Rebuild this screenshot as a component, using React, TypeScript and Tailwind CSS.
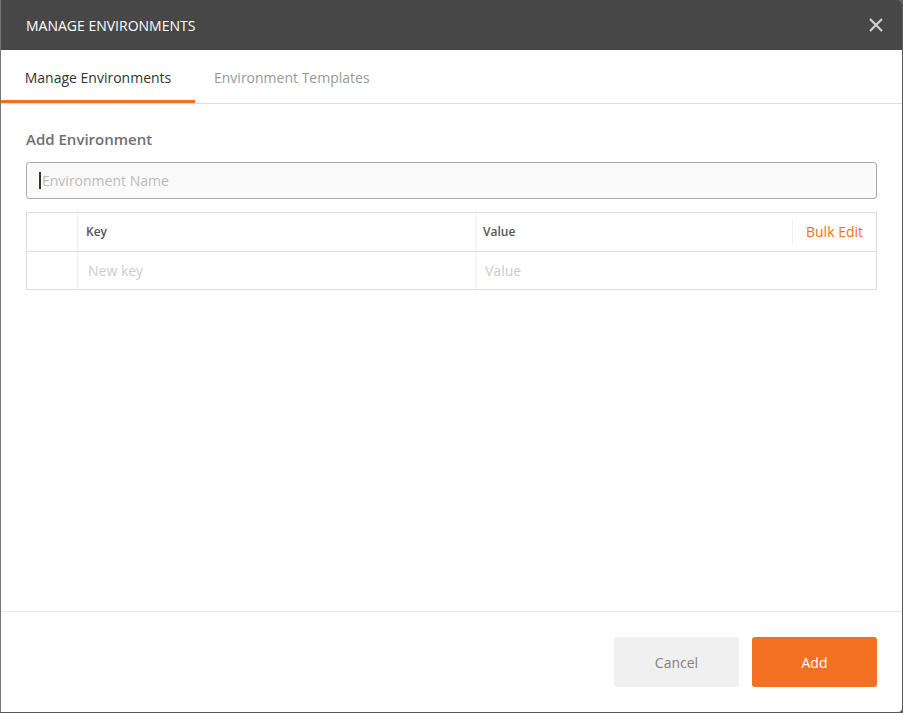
export default function App() {
  const f = { fontFamily: '"Open Sans", "Noto Sans", sans-serif' };
  return (
    <div className="w-[903px] h-[713px] bg-[#5a5a5a] overflow-hidden" style={f}>
      <div className="w-[902px] h-[712px] bg-white rounded-br-[4px] rounded-tr-[4px] flex flex-col border-l border-[#777]">
        <div className="h-[50px] bg-[#474747] flex items-center justify-between pl-[25px] pr-[18px] rounded-tr-[4px]">
          <span className="text-white text-[14px]">MANAGE ENVIRONMENTS</span>
          <svg width="16" height="16" viewBox="0 0 16 16"><path d="M2 2L14 14M14 2L2 14" stroke="#d0d0d0" strokeWidth="2.2" /></svg>
        </div>
        <div className="h-[54px] flex border-b border-[#ddd] text-[14px]">
          <div className="w-[194px] flex items-center justify-center border-b-[3px] border-[#f47023] pt-[4px] text-[#333]">Manage Environments</div>
          <div className="flex items-center pl-[19px] pt-[1px] text-[#999]">Environment Templates</div>
        </div>
        <div className="flex-1 px-[25px]">
          <div className="mt-[24px] text-[15px] font-semibold text-[#707070]">Add Environment</div>
          <div className="mt-[11px] h-[37px] rounded-[3px] border border-[#aaa] bg-[#fafafa] flex items-center pl-[12px] text-[14px] text-[#bbb]">
            <span className="w-[2px] h-[17px] bg-[#333] mr-[1px]"></span>Environment Name
          </div>
          <div className="mt-[13px] border border-[#ddd] text-[13px]">
            <div className="h-[39px] flex border-b border-[#ddd]">
              <div className="w-[52px] border-r-[3px] border-[#f6f6f6]"></div>
              <div className="w-[398px] flex items-center pl-[7px] font-semibold text-[#555] text-[12px] border-r-[2px] border-[#f6f6f6]">Key</div>
              <div className="flex-1 flex items-center pl-[6px] font-semibold text-[#555] text-[12px]">Value</div>
              <div className="my-[7px] border-l border-[#f0f0f0] flex items-center px-[13px] text-[#f47023] text-[14px]">Bulk Edit</div>
            </div>
            <div className="h-[37px] flex text-[#ccc] text-[14px]">
              <div className="w-[52px] border-r-[3px] border-[#f6f6f6]"></div>
              <div className="w-[398px] flex items-center pl-[9px] border-r-[2px] border-[#f6f6f6]">New key</div>
              <div className="flex-1 flex items-center pl-[8px]">Value</div>
            </div>
          </div>
        </div>
        <div className="h-[101px] border-t border-[#e6e6e6] flex justify-end items-start pt-[25px] pr-[25px] gap-[13px] text-[14px]">
          <button className="w-[125px] h-[50px] rounded-[3px] bg-[#f0f0f0] text-[#808080]">Cancel</button>
          <button className="w-[125px] h-[50px] rounded-[3px] bg-[#f47023] text-white">Add</button>
        </div>
      </div>
    </div>
  );
}
